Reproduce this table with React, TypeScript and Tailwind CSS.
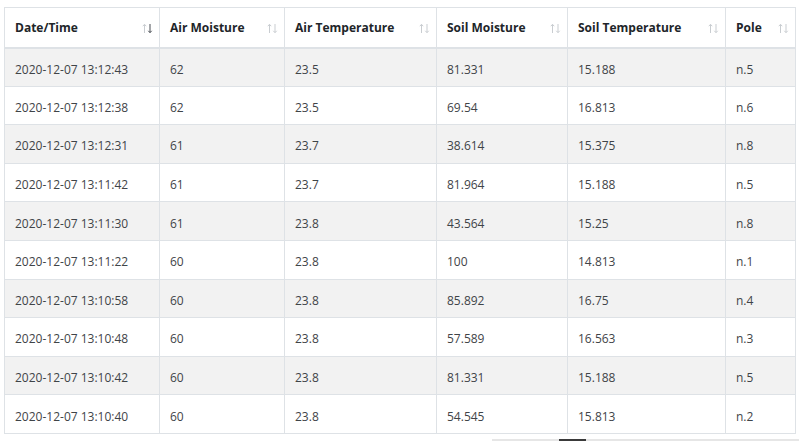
import React from "react"

type Reading = {
  time: string
  airMoisture: string
  airTemp: string
  soilMoisture: string
  soilTemp: string
  pole: string
}

const readings: Reading[] = [
  { time: "2020-12-07 13:12:43", airMoisture: "62", airTemp: "23.5", soilMoisture: "81.331", soilTemp: "15.188", pole: "n.5" },
  { time: "2020-12-07 13:12:38", airMoisture: "62", airTemp: "23.5", soilMoisture: "69.54", soilTemp: "16.813", pole: "n.6" },
  { time: "2020-12-07 13:12:31", airMoisture: "61", airTemp: "23.7", soilMoisture: "38.614", soilTemp: "15.375", pole: "n.8" },
  { time: "2020-12-07 13:11:42", airMoisture: "61", airTemp: "23.7", soilMoisture: "81.964", soilTemp: "15.188", pole: "n.5" },
  { time: "2020-12-07 13:11:30", airMoisture: "61", airTemp: "23.8", soilMoisture: "43.564", soilTemp: "15.25", pole: "n.8" },
  { time: "2020-12-07 13:11:22", airMoisture: "60", airTemp: "23.8", soilMoisture: "100", soilTemp: "14.813", pole: "n.1" },
  { time: "2020-12-07 13:10:58", airMoisture: "60", airTemp: "23.8", soilMoisture: "85.892", soilTemp: "16.75", pole: "n.4" },
  { time: "2020-12-07 13:10:48", airMoisture: "60", airTemp: "23.8", soilMoisture: "57.589", soilTemp: "16.563", pole: "n.3" },
  { time: "2020-12-07 13:10:42", airMoisture: "60", airTemp: "23.8", soilMoisture: "81.331", soilTemp: "15.188", pole: "n.5" },
  { time: "2020-12-07 13:10:40", airMoisture: "60", airTemp: "23.8", soilMoisture: "54.545", soilTemp: "15.813", pole: "n.2" },
]

const columns = [
  { label: "Date/Time", width: "w-[155px]", sorted: true },
  { label: "Air Moisture", width: "w-[125px]", sorted: false },
  { label: "Air Temperature", width: "w-[152px]", sorted: false },
  { label: "Soil Moisture", width: "w-[131px]", sorted: false },
  { label: "Soil Temperature", width: "w-[158px]", sorted: false },
  { label: "Pole", width: "w-[70px]", sorted: false },
]

function SortIcon({ active }: { active: boolean }) {
  return (
    <svg width="11" height="11" viewBox="0 0 11 11" className="shrink-0">
      {/* up arrow */}
      <g stroke="#c9cdd1" strokeWidth="1" fill="none">
        <path d="M2.5 10V1.5" />
        <path d="M0.8 3.2L2.5 1.3L4.2 3.2" />
      </g>
      {/* down arrow */}
      <g stroke={active ? "#4a4f55" : "#c9cdd1"} strokeWidth="1" fill="none">
        <path d="M8 1V9.5" />
        <path d="M6.3 7.8L8 9.7L9.7 7.8" />
      </g>
    </svg>
  )
}

export default function App() {
  return (
    <div className="w-[806px] h-[441px] overflow-hidden bg-white pl-[4px] pt-[7px] font-['Open_Sans',sans-serif] text-[12px]">
      <table className="w-[791px] table-fixed border-collapse border border-[#dee2e6]">
        <thead>
          <tr className="h-[40px]">
            {columns.map((col) => (
              <th
                key={col.label}
                className={`${col.width} border border-b-2 border-[#dee2e6] pl-[10px] pr-[6px] pt-[2px] text-left align-middle font-bold text-[#212529]`}
              >
                <div className="flex items-center justify-between">
                  <span>{col.label}</span>
                  <SortIcon active={col.sorted} />
                </div>
              </th>
            ))}
          </tr>
        </thead>
        <tbody>
          {readings.map((r, i) => (
            <tr key={r.time} className={`h-[38.6px] ${i % 2 === 0 ? "bg-[#f2f2f2]" : "bg-white"}`}>
              {[r.time, r.airMoisture, r.airTemp, r.soilMoisture, r.soilTemp, r.pole].map((v, j) => (
                <td key={j} className="border border-[#dee2e6] pl-[10px] pt-[5px] align-middle text-[#3f4448]">
                  {v}
                </td>
              ))}
            </tr>
          ))}
        </tbody>
      </table>

      {/* top edge of the pager / scrollbar below the table */}
      <div className="mt-[5px] flex justify-end pr-[7px]">
        <div className="flex h-[3px] w-[307px] bg-[#e6e6e6]">
          <div className="w-[67px]" />
          <div className="w-[27px] bg-[#3a3a3a]" />
        </div>
      </div>
    </div>
  )
}
